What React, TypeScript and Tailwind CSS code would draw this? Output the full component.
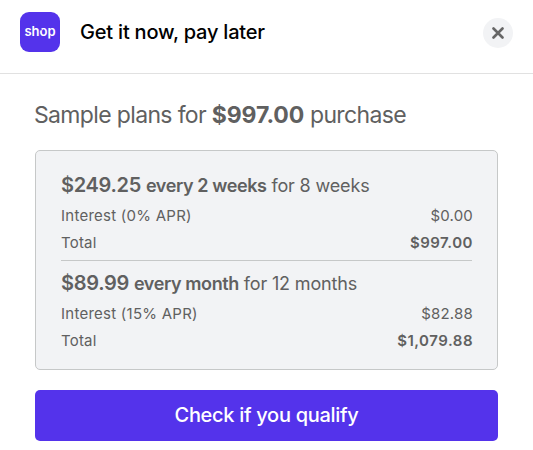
interface Plan {
  amount: string;
  cadence: string;
  term: string;
  apr: string;
  interest: string;
  total: string;
}

const plans: Plan[] = [
  { amount: '$249.25', cadence: 'every 2 weeks', term: 'for 8 weeks', apr: '0%', interest: '$0.00', total: '$997.00' },
  { amount: '$89.99', cadence: 'every month', term: 'for 12 months', apr: '15%', interest: '$82.88', total: '$1,079.88' },
];

function ShopLogo() {
  return (
    <div className="relative flex size-10 items-center justify-center rounded-[9px] bg-[#5433eb]">
      <span className="-mt-px text-[13px] leading-none font-semibold text-white">shop</span>
      {/* slanted cut in the "o" */}
      <svg viewBox="0 0 40 40" className="absolute inset-0 size-10" fill="none">
        <path d="M19.2 15.8l2.2 2.4" stroke="#5433eb" strokeWidth="1.4" />
      </svg>
    </div>
  );
}

function PlanRows({ plan }: { plan: Plan }) {
  return (
    <div>
      <p className="text-[18px] leading-[30px] tracking-[-0.15px] whitespace-nowrap">
        <span className="text-[20px] font-semibold tracking-[-0.3px]">{plan.amount}</span>{' '}
        <span className="font-semibold tracking-[-0.4px]">{plan.cadence}</span> {plan.term}
      </p>
      <div className="mt-[2px] flex justify-between text-[15px] leading-[26px]">
        <span className="tracking-[0.25px]">Interest ({plan.apr} APR)</span>
        <span className="-mr-px tracking-[0.2px]">{plan.interest}</span>
      </div>
      <div className="flex justify-between text-[15px] leading-[27px]">
        <span className="tracking-[0.2px]">Total</span>
        <span className="-mr-px font-semibold tracking-[0.5px]">{plan.total}</span>
      </div>
    </div>
  );
}

export default function App() {
  return (
    <div className="h-[450px] w-[533px] bg-white font-['Inter',sans-serif] text-[#606060]">
      <header className="flex h-[74px] items-start border-b border-[#e1e1e1] pt-3 pr-5 pl-5">
        <ShopLogo />
        <h1 className="ml-5 flex-1 text-[20px] leading-10 font-medium tracking-[-0.2px] text-black">
          Get it now, pay later
        </h1>
        <button aria-label="Close" className="mt-[6px] flex size-[30px] items-center justify-center rounded-full bg-[#f2f3f5]">
          <svg viewBox="0 0 12 12" className="size-3 stroke-[#666666]" fill="none" strokeWidth="2.6" strokeLinecap="round">
            <path d="M1.5 1.5l9 9M10.5 1.5l-9 9" />
          </svg>
        </button>
      </header>

      <main className="px-[35px] pt-[25px]">
        <h2 className="-ml-px text-[23px] leading-8 tracking-[-0.65px] whitespace-nowrap">
          Sample plans for <span className="font-bold tracking-[-0.1px]">$997.00</span> purchase
        </h2>
        <section className="mt-[19px] flex h-[220px] flex-col rounded-[5px] border border-[#c6c8c8] bg-[#f2f3f5] px-[25px] pt-[19px]">
          <PlanRows plan={plans[0]} />
          <hr className="mt-1 mb-[7px] border-[#c6c8c8]" />
          <PlanRows plan={plans[1]} />
        </section>
        <button className="mt-[19.5px] h-[51px] w-full rounded-[5px] bg-[#5433eb] text-[20px] font-medium tracking-[-0.3px] text-white">
          Check if you qualify
        </button>
      </main>
    </div>
  );
}
